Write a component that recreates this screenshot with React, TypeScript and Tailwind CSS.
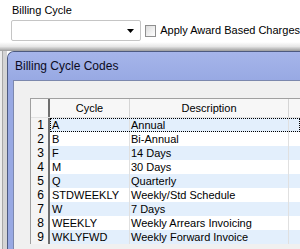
import React from "react";

const rows = [
  { code: "A", desc: "Annual" },
  { code: "B", desc: "Bi-Annual" },
  { code: "F", desc: "14 Days" },
  { code: "M", desc: "30 Days" },
  { code: "Q", desc: "Quarterly" },
  { code: "STDWEEKLY", desc: "Weekly/Std Schedule" },
  { code: "W", desc: "7 Days" },
  { code: "WEEKLY", desc: "Weekly Arrears Invoicing" },
  { code: "WKLYFWD", desc: "Weekly Forward Invoice" },
];

const font = { fontFamily: '"Liberation Sans", Arial, sans-serif' };

export default function App() {
  return (
    <div
      className="w-[300px] h-[249px] overflow-hidden bg-white flex flex-col text-[11px] text-black"
      style={font}
    >
      {/* form strip behind the dialog */}
      <div className="h-[42px] shrink-0 flex flex-col pl-[12px] pt-[3px]">
        <div className="leading-[14px]">Billing Cycle</div>
        <div className="flex items-center mt-[3px] -ml-[1px]">
          <div className="w-[136px] h-[21px] border border-[#c5c5c5] rounded-[2px] bg-white flex items-center justify-end pr-[6px]">
            <svg width="7" height="4" viewBox="0 0 7 4">
              <path d="M0 0h7L3.5 4z" fill="#000" />
            </svg>
          </div>
          <div className="ml-[4px] w-[12px] h-[12px] border border-[#8f8f8f] bg-gradient-to-br from-[#dcdcdc] to-white" />
          <span className="ml-[4px] whitespace-nowrap">Apply Award Based Charges</span>
        </div>
      </div>
      <div className="h-[9px] shrink-0 bg-gradient-to-b from-white via-[#e6e6e6] to-[#9c9c9c]" />

      <div className="flex flex-1 min-h-0">
        <div className="w-[7px] shrink-0 bg-[#dcdcdc] flex">
          <div className="w-[2px] bg-[#ececec]" />
          <div className="w-[1px] bg-[#a8a8a8]" />
          <div className="w-[4px] bg-[#d4d4d4]" />
        </div>

        {/* dialog */}
        <div className="flex-1 flex flex-col border-t border-l border-[#4d5a80] rounded-tl-[7px] overflow-hidden bg-[#9aabe4]">
          <div className="h-[28px] shrink-0 flex items-center pl-[7px] bg-gradient-to-b from-[#a6b5ea] to-[#98a9e3] text-[12px] text-[#0b0b22]">
            Billing Cycle Codes
          </div>
          <div className="flex flex-1 min-h-0">
            <div className="w-[5px] shrink-0 bg-[#98a9e3]" />
            <div className="flex-1 bg-[#f0f0f0] border-t border-l border-[#7c88ad] pt-[17px] pl-[16px]">
              <div className="border-t border-l border-[#a0a0a0] bg-white">
                {/* header */}
                <div className="flex h-[19px] bg-[#f7f7f7] border-b border-[#e2e2e2]">
                  <div className="w-[19px] shrink-0 border-r-2 border-[#6e6e6e]" />
                  <div className="w-[80px] shrink-0 border-r border-[#d5d5d5] flex items-center justify-center">
                    Cycle
                  </div>
                  <div className="w-[159px] shrink-0 border-r border-[#d5d5d5] flex items-center justify-center">
                    Description
                  </div>
                  <div className="flex-1" />
                </div>
                {rows.map((r, i) => (
                  <div key={r.code} className="flex h-[14px] leading-[14px]">
                    <div className="w-[19px] shrink-0 bg-[#f4f4f4] border-r-2 border-[#6e6e6e] text-right pr-[4px] text-[12px]">
                      {i + 1}
                    </div>
                    <div
                      className={`flex-1 flex ${i % 2 === 0 ? "bg-[#e3effc]" : "bg-white"} ${
                        i === 0 ? "outline outline-1 outline-dotted outline-black -outline-offset-1" : ""
                      }`}
                    >
                      <div className="w-[80px] shrink-0 border-r border-[#e0e0e0] pl-[2px] whitespace-nowrap">
                        {r.code}
                      </div>
                      <div className="w-[159px] shrink-0 border-r border-[#e0e0e0] pl-[1px] whitespace-nowrap">
                        {r.desc}
                      </div>
                      <div className="flex-1" />
                    </div>
                  </div>
                ))}
              </div>
            </div>
          </div>
        </div>
      </div>
    </div>
  );
}
